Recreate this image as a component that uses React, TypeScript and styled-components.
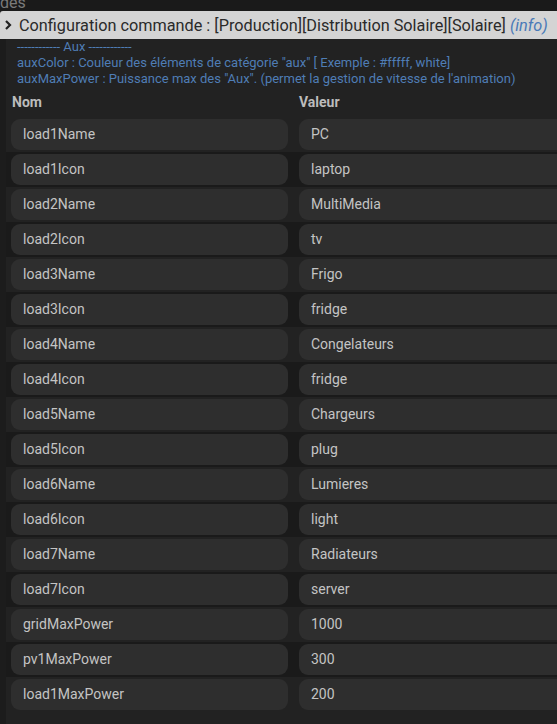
import { createGlobalStyle, styled } from 'styled-components';

const rows: [string, string][] = [
  ['load1Name', 'PC'],
  ['load1Icon', 'laptop'],
  ['load2Name', 'MultiMedia'],
  ['load2Icon', 'tv'],
  ['load3Name', 'Frigo'],
  ['load3Icon', 'fridge'],
  ['load4Name', 'Congelateurs'],
  ['load4Icon', 'fridge'],
  ['load5Name', 'Chargeurs'],
  ['load5Icon', 'plug'],
  ['load6Name', 'Lumieres'],
  ['load6Icon', 'light'],
  ['load7Name', 'Radiateurs'],
  ['load7Icon', 'server'],
  ['gridMaxPower', '1000'],
  ['pv1MaxPower', '300'],
  ['load1MaxPower', '200'],
];

function App() {
  return (
    <>
      <GlobalStyle />
      <TopStrip>
        <Crumb>des</Crumb>
      </TopStrip>
      <Header>
        <Chevron width="10" height="12" viewBox="0 0 10 12">
          <path d="M3 2 L7 6 L3 10" fill="none" stroke="#222" strokeWidth="2.2" />
        </Chevron>
        <Title>
          Configuration commande : [Production][Distribution Solaire][Solaire] <Info>(info)</Info>
        </Title>
      </Header>
      <Panel>
        <Description>
          <div>------------ Aux ------------</div>
          <div>auxColor : Couleur des éléments de catégorie "aux" [ Exemple : #fffff, white]</div>
          <div>auxMaxPower : Puissance max des "Aux". (permet la gestion de vitesse de l'animation)</div>
        </Description>
        <Table>
          <HeadRow>
            <HeadCell>Nom</HeadCell>
            <HeadCell>Valeur</HeadCell>
          </HeadRow>
          {rows.map(([name, value], i) => (
            <Row key={name} $striped={i % 2 === 1}>
              <NameCell>
                <Field>{name}</Field>
              </NameCell>
              <ValueCell>
                <Field>{value}</Field>
              </ValueCell>
            </Row>
          ))}
        </Table>
      </Panel>
    </>
  );
}

const GlobalStyle = createGlobalStyle`
  html, body {
    margin: 0;
    background: #1c1c1c;
    font-family: Roboto, "Liberation Sans", sans-serif;
  }
`;

const TopStrip = styled.div`
  height: 11px;
  overflow: hidden;
  background: #1a1a1a;
`;

const Crumb = styled.div`
  margin-top: -6px;
  font-size: 16px;
  line-height: 18px;
  color: #7a7a7a;
`;

const Header = styled.div`
  display: flex;
  align-items: center;
  height: 28px;
  padding-left: 3px;
  background: #d4d4d4;
  border-top-left-radius: 3px;
  white-space: nowrap;
  overflow: hidden;
`;

const Chevron = styled.svg`
  flex: none;
  margin-right: 6px;
`;

const Title = styled.span`
  font-size: 16.25px;
  color: #2a2a2a;
`;

const Info = styled.span`
  font-style: italic;
  color: #4a7ab8;
`;

const Panel = styled.div`
  background: #222222;
  margin-left: 6px;
  padding-bottom: 16px;
  min-height: 685px;
`;

const Description = styled.div`
  padding-left: 11px;
  font-size: 13px;
  line-height: 16px;
  color: #4f7db5;
  white-space: nowrap;
`;

const Table = styled.div`
  display: flex;
  flex-direction: column;
`;

const HeadRow = styled.div`
  display: grid;
  grid-template-columns: 288px 1fr;
  height: 30px;
  align-items: center;
`;

const HeadCell = styled.div`
  padding-left: 6px;
  font-size: 14px;
  font-weight: 700;
  color: #bcbcbc;
  &:nth-child(2) {
    padding-left: 5px;
  }
`;

const Row = styled.div<{ $striped: boolean }>`
  display: grid;
  grid-template-columns: 288px 1fr;
  height: 35px;
  align-items: center;
  background: ${(p) => (p.$striped ? '#1a1a1a' : 'transparent')};
`;

const NameCell = styled.div`
  padding: 0 6px 0 5px;
`;

const ValueCell = styled.div`
  padding-left: 5px;
  margin-right: -20px;
`;

const Field = styled.div`
  height: 31px;
  line-height: 31px;
  padding-left: 12px;
  border-radius: 9px;
  background: #2e2e2e;
  font-size: 14px;
  color: #c4c4c4;
`;

export default App;
